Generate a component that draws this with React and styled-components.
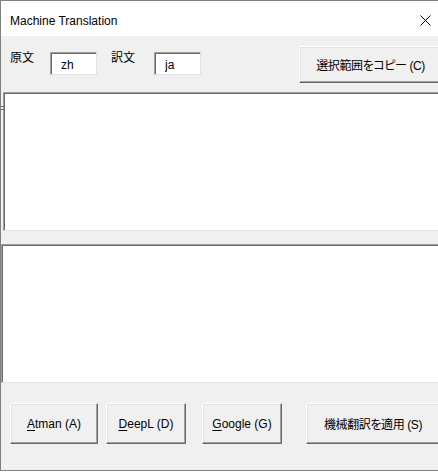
import React from "react";
import styled, { createGlobalStyle } from "styled-components";

const Global = createGlobalStyle`
  * { box-sizing: border-box; }
  html, body { margin: 0; padding: 0; overflow: hidden; background: #fff; }
  body { font-family: "Liberation Sans", "Noto Sans CJK JP", sans-serif; font-size: 12px; color: #000; }
`;

const Window = styled.div`
  position: relative;
  width: 438px;
  height: 471px;
  border-top: 1px solid #808080;
  border-left: 1px solid #808080;
  border-bottom: 1px solid #808080;
  display: flex;
  flex-direction: column;
  overflow: hidden;
`;

const TitleBar = styled.div`
  height: 35px;
  flex: none;
  background: #fff;
  display: flex;
  align-items: center;
  justify-content: space-between;
  padding: 4px 7px 0 9px;
`;

const Title = styled.span`
  font-family: "Liberation Sans", sans-serif;
  font-size: 12px;
  color: #000;
`;

const Close = styled.svg`
  width: 11px;
  height: 11px;
  display: block;
`;

const Body = styled.div`
  flex: 1;
  background: #f0f0f0;
  display: flex;
  flex-direction: column;
`;

const TopRow = styled.div`
  height: 56px;
  flex: none;
  display: flex;
  align-items: flex-start;
  padding-left: 9px;
`;

const Label = styled.span`
  font-family: "Noto Sans CJK JP", sans-serif;
  font-size: 12px;
  line-height: 16px;
  margin-top: 13px;
  margin-left: ${(p) => p.$ml || 0}px;
  white-space: nowrap;
`;

const Field = styled.input`
  width: 47px;
  height: 23px;
  margin-top: 16px;
  margin-left: ${(p) => p.$ml || 0}px;
  padding: 2px 0 0 10px;
  background: #fff;
  border: 1px solid;
  border-color: #a0a0a0 #e3e3e3 #e3e3e3 #a0a0a0;
  box-shadow: inset 1px 1px 0 #696969;
  font-family: "Liberation Sans", sans-serif;
  font-size: 12px;
  color: #000;
  outline: none;
`;

const Button = styled.button`
  flex: none;
  width: ${(p) => p.$w}px;
  height: ${(p) => p.$h}px;
  margin-top: ${(p) => p.$mt || 0}px;
  margin-left: ${(p) => p.$ml || 0}px;
  background: #f0f0f0;
  border: 1px solid;
  border-color: #fff #696969 #696969 #fff;
  box-shadow: inset -1px -1px 0 #a0a0a0, inset 1px 1px 0 #e3e3e3;
  font-family: "Liberation Sans", "Noto Sans CJK JP", sans-serif;
  font-size: 12px;
  font-feature-settings: "palt";
  letter-spacing: ${(p) => (p.$tight ? "-0.4px" : "0")};
  color: #000;
  padding: 0;
  white-space: nowrap;
  u { text-decoration: underline; text-underline-offset: 2px; }
`;

const TextBox = styled.textarea`
  display: block;
  flex: none;
  height: 139px;
  margin: 0 -12px 0 ${(p) => p.$ml || 0}px;
  resize: none;
  background: #fff;
  border: 1px solid;
  border-color: #a0a0a0 #e3e3e3 #e3e3e3 #a0a0a0;
  box-shadow: inset 1px 1px 0 #696969;
  outline: none;
  padding: 2px;
  font-family: "Liberation Sans", sans-serif;
  font-size: 12px;
`;

const Gap = styled.div`
  height: 13px;
  flex: none;
`;

const BottomRow = styled.div`
  flex: 1;
  display: flex;
  align-items: flex-start;
  padding: 20px 0 0 9px;
`;

const Tick = styled.span`
  position: absolute;
  left: 0;
  top: 105px;
  width: 3px;
  height: 4px;
  border-top: 1px solid #696969;
  border-bottom: 1px solid #696969;
`;

export default function App() {
  return (
    <>
      <Global />
      <Window>
        <TitleBar>
          <Title>Machine Translation</Title>
          <Close viewBox="0 0 11 11">
            <path d="M0.5 0.5 L10.5 10.5 M10.5 0.5 L0.5 10.5" stroke="#000" strokeWidth="1" fill="none" />
          </Close>
        </TitleBar>
        <Body>
          <TopRow>
            <Label>原文</Label>
            <Field $ml={16} readOnly value="zh" />
            <Label $ml={14}>訳文</Label>
            <Field $ml={19} readOnly value="ja" />
            <Button $w={143} $h={37} $mt={10} $ml={98} $tight>選択範囲をコピー (C)</Button>
          </TopRow>
          <TextBox $ml={2} readOnly />
          <Gap />
          <TextBox $ml={0} readOnly />
          <BottomRow>
            <Button $w={88} $h={41}><u>A</u>tman (A)</Button>
            <Button $w={80} $h={41} $ml={8}><u>D</u>eepL (D)</Button>
            <Button $w={80} $h={41} $ml={16}><u>G</u>oogle (G)</Button>
            <Button $w={134} $h={41} $ml={24} $tight>機械翻訳を適用 (S)</Button>
          </BottomRow>
        </Body>
        <Tick />
      </Window>
    </>
  );
}
